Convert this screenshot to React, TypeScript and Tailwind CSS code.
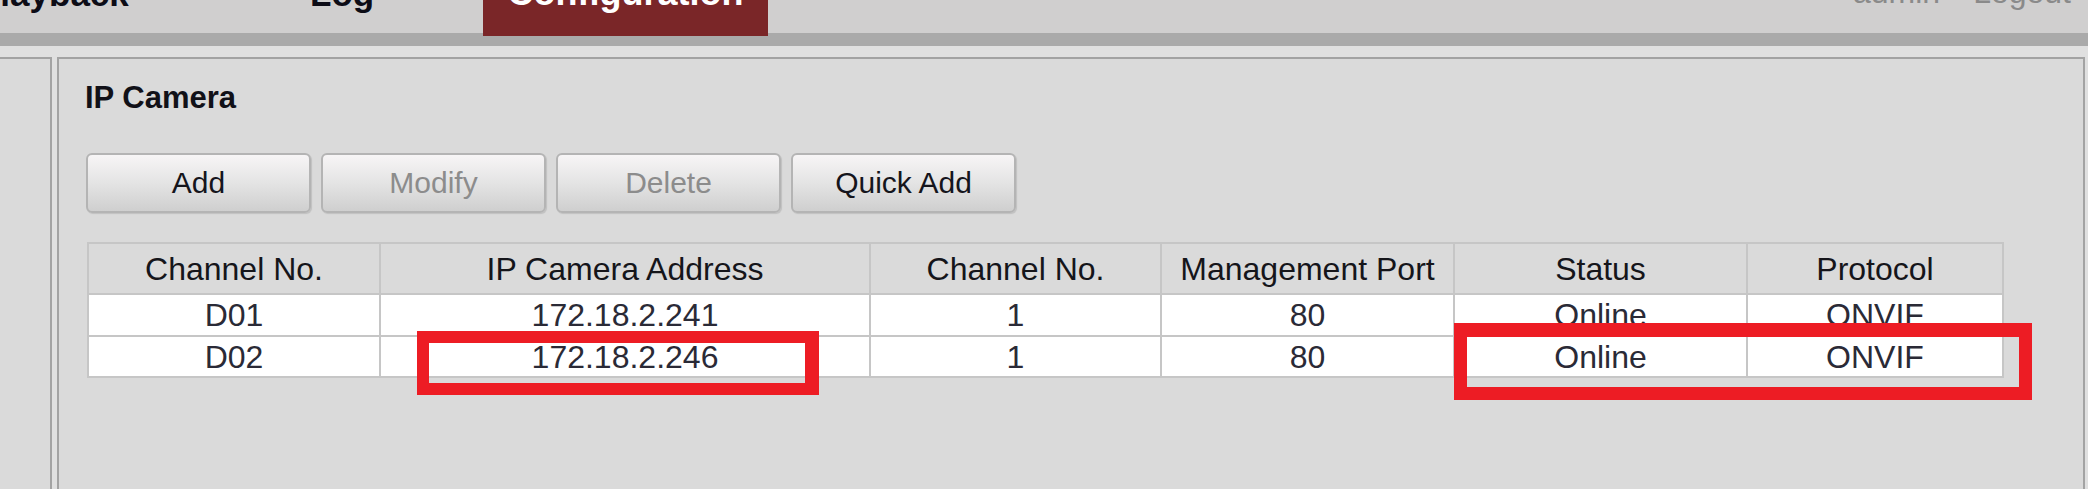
import React from "react";

const cols = ["w-[292px]", "w-[490px]", "w-[291px]", "w-[293px]", "w-[293px]", "w-[256px]"];
const headers = ["Channel No.", "IP Camera Address", "Channel No.", "Management Port", "Status", "Protocol"];
const rows = [
  ["D01", "172.18.2.241", "1", "80", "Online", "ONVIF"],
  ["D02", "172.18.2.246", "1", "80", "Online", "ONVIF"],
];

function Btn({ label, disabled }: { label: string; disabled?: boolean }) {
  return (
    <div
      className={
        "flex h-[60px] w-[225px] items-center justify-center rounded-[6px] border-2 border-[#b4b4b4] bg-[linear-gradient(to_bottom,#f7f5f6,#e4e4e4_50%,#cfcfcf)] text-[30px] leading-none shadow-[1px_1px_1px_rgba(0,0,0,0.12)] " +
        (disabled ? "text-[#8c8c8c]" : "text-[#15151c]")
      }
    >
      {label}
    </div>
  );
}

export default function App() {
  return (
    <div className="relative flex h-[489px] w-[2088px] flex-col overflow-hidden bg-[#e0e0e0] font-['Liberation_Sans',Arial,sans-serif]">
      {/* top navigation */}
      <div className="flex h-[33px] shrink-0 bg-[#d0cfcf]">
        <div className="w-[310px] shrink-0">
          <span className="-ml-[23px] -mt-[24px] block whitespace-nowrap text-[35px] font-bold leading-none text-[#0c0c16]">
            Playback
          </span>
        </div>
        <div className="w-[173px] shrink-0">
          <span className="-mt-[24px] block whitespace-nowrap text-[35px] font-bold leading-none text-[#0c0c16]">Log</span>
        </div>
        <div className="relative z-10 flex h-[36px] w-[285px] shrink-0 justify-center bg-[#7a2628]">
          <span className="-mt-[25px] block whitespace-nowrap text-[36px] font-bold leading-none text-white">
            Configuration
          </span>
        </div>
        <div className="flex flex-1 justify-end gap-[33px] pr-[17px]">
          <span className="-mt-[24px] block text-[32px] leading-none text-[#8a8a8a]">admin</span>
          <span className="-mt-[24px] block text-[32px] leading-none text-[#8a8a8a]">Logout</span>
        </div>
      </div>
      <div className="h-[13px] shrink-0 bg-[#aaaaaa]" />
      <div className="h-[11px] shrink-0 bg-[#e0e0e0]" />

      {/* main */}
      <div className="flex min-h-0 flex-1">
        <div className="w-[52px] shrink-0 border-r-2 border-t-2 border-[#a3a3a3] bg-[#dadada]" />
        <div className="w-[5px] shrink-0" />
        <div className="w-[2028px] shrink-0 border-x-2 border-t-2 border-[#a3a3a3] bg-[#dadada] pl-[26px] pt-[21px]">
          <div className="text-[31px] font-bold leading-[36px] text-[#111118]">IP Camera</div>

          <div className="ml-[1px] mt-[37px] flex gap-[10px]">
            <Btn label="Add" />
            <Btn label="Modify" disabled />
            <Btn label="Delete" disabled />
            <Btn label="Quick Add" />
          </div>

          <div className="ml-[2px] mt-[29px] w-fit border-l-2 border-t-2 border-[#c6c6c6]">
            <div className="flex">
              {headers.map((h, i) => (
                <div
                  key={i}
                  className={
                    cols[i] +
                    " flex h-[51px] shrink-0 items-center justify-center border-b-2 border-r-2 border-[#c6c6c6] bg-[#dadada] text-[32px] leading-none text-[#15151a]"
                  }
                >
                  {h}
                </div>
              ))}
            </div>
            {rows.map((r, ri) => (
              <div key={ri} className="flex">
                {r.map((c, i) => (
                  <div
                    key={i}
                    className={
                      cols[i] +
                      " flex shrink-0 items-center justify-center border-b-2 border-r-2 border-[#c6c6c6] bg-white text-[32px] leading-none text-[#2a2a36] " +
                      (ri === 0 ? "h-[42px]" : "h-[41px]")
                    }
                  >
                    {c}
                  </div>
                ))}
              </div>
            ))}
          </div>
        </div>
      </div>

      {/* red annotation boxes */}
      <div className="absolute left-[417px] top-[331px] h-[64px] w-[402px] border-[12px] border-r-[14px] border-[#ed1c24]" />
      <div className="absolute left-[1454px] top-[323px] h-[77px] w-[578px] border-[13px] border-t-[14px] border-[#ed1c24]" />
    </div>
  );
}
